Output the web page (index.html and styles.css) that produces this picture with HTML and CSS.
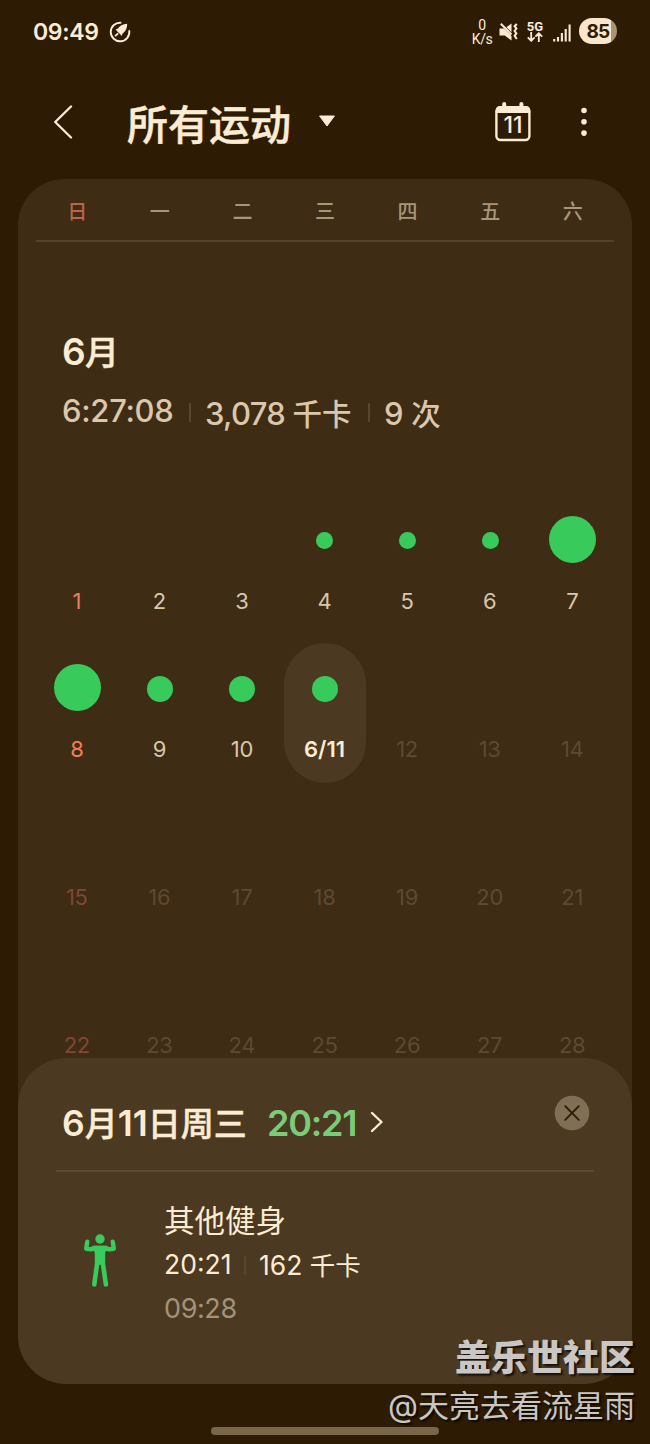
FILE: index.html
```html
<!DOCTYPE html>
<html lang="zh-CN">
<head>
    <meta charset="UTF-8">
    <meta name="viewport" content="width=device-width, initial-scale=1.0">
    <title>所有运动</title>
    <link rel="stylesheet" href="styles.css">
</head>
<body>
    <div class="status-bar">
        <span class="clock">09:49</span>
        <svg class="boost-icon" width="22" height="22" viewBox="0 0 22 22">
            <path d="M11.5 1.7A9.3 9.3 0 1 0 20.3 10" fill="none" stroke="#fcecd3" stroke-width="1.9" stroke-linecap="round"/>
            <path d="M18.2 2.8C13.6 3 10.400 5 9 7.600L6.600 8.600 8.400 10.400 11 13 12.600 15 13.6 12.6C16.6 10.400 18.3 7.2 18.2 2.8Z" fill="#fcecd3"/>
            <path d="M6.600 14.600L8.600 12.800" stroke="#fcecd3" stroke-width="1.8" stroke-linecap="round"/>
        </svg>
        <div class="status-right">
            <div class="net-speed"><span>0</span><span>K/s</span></div>
            <svg class="mute-icon" width="19" height="20" viewBox="0 0 19 20">
                <path d="M.5 6.6H5L12.5 14V18.5L5.8 13.6H.5Z" fill="#fcecd3"/>
                <path d="M7.4 5.2L12.5 1.5V10.2Z" fill="#fcecd3"/>
                <path d="M1.8 1.8L12.5 12.5" stroke="#fcecd3" stroke-width="2"/>
                <path d="M17.8 2L15.6 4.2 17.4 6.6 15.6 9 17.4 11.4 15.6 13.8 17.8 17" fill="none" stroke="#fcecd3" stroke-width="2"/>
            </svg>
            <div class="mobile-data">
                <span>5G</span>
                <svg width="16" height="10" viewBox="0 0 16 10">
                    <path d="M4.2 0V8.6M.8 5.4L4.2 8.8 7.6 5.4M11.8 10V1.4M8.4 4.6L11.8 1.2 15.2 4.6" fill="none" stroke="#fcecd3" stroke-width="1.8"/>
                </svg>
            </div>
            <svg class="signal-icon" width="18" height="18" viewBox="0 0 18 18">
                <path d="M1.2 15V17.4M5 13V17.4M8.9 9V17.4M12.7 5V17.4M16.6 .4V17.4" stroke="#fcecd3" stroke-width="2.1"/>
            </svg>
            <div class="battery">85</div>
        </div>
    </div>

    <div class="app-bar">
        <svg class="back" width="20" height="34" viewBox="0 0 20 34">
            <path d="M18 1.5L2.2 17 18 32.5" fill="none" stroke="#fcecd3" stroke-width="2.3" stroke-linecap="round" stroke-linejoin="round"/>
        </svg>
        <h1>所有运动</h1>
        <svg class="dropdown" width="18" height="12" viewBox="0 0 18 12">
            <path d="M1.6 1H16.4L9 11Z" fill="#fcecd3" stroke="#fcecd3" stroke-linejoin="round"/>
        </svg>
        <div class="today">
            <svg width="36" height="40" viewBox="0 0 36 40">
                <rect x="1.4" y="5.4" width="33" height="32.6" rx="4" fill="none" stroke="#fcecd3" stroke-width="2.4"/>
                <path d="M.8 11V8.5Q.8 4 5 4H31Q35.2 4 35.2 8.5V11Z" fill="#fcecd3"/>
                <path d="M9.2 2V7M26.4 2V7" stroke="#fcecd3" stroke-width="4" stroke-linecap="round"/>
            </svg>
            <span>11</span>
        </div>
        <svg class="more" width="6" height="30" viewBox="0 0 6 30">
            <circle cx="3" cy="3.5" r="2.8" fill="#fcecd3"/>
            <circle cx="3" cy="14.8" r="2.8" fill="#fcecd3"/>
            <circle cx="3" cy="26.1" r="2.8" fill="#fcecd3"/>
        </svg>
    </div>

    <div class="calendar">
        <div class="weekdays">
            <span class="sun">日</span><span>一</span><span>二</span><span>三</span><span>四</span><span>五</span><span>六</span>
        </div>
        <div class="summary">
            <h2><b>6</b>月</h2>
            <div class="totals">
                <span class="total-time">6:27:08</span>
                <i class="sep"></i>
                <span class="total-cal">3,078 <em>千卡</em></span>
                <i class="sep"></i>
                <span class="total-count">9 <em>次</em></span>
            </div>
        </div>
        <div class="days">
            <div class="day sun"><div class="mark"></div>1</div>
            <div class="day"><div class="mark"></div>2</div>
            <div class="day"><div class="mark"></div>3</div>
            <div class="day"><div class="mark"><i class="dot small"></i></div>4</div>
            <div class="day"><div class="mark"><i class="dot small"></i></div>5</div>
            <div class="day"><div class="mark"><i class="dot small"></i></div>6</div>
            <div class="day"><div class="mark"><i class="dot large"></i></div>7</div>

            <div class="day sun"><div class="mark"><i class="dot large"></i></div>8</div>
            <div class="day"><div class="mark"><i class="dot"></i></div>9</div>
            <div class="day"><div class="mark"><i class="dot"></i></div>10</div>
            <div class="day selected"><div class="mark"><i class="dot"></i></div>6/11</div>
            <div class="day future"><div class="mark"></div>12</div>
            <div class="day future"><div class="mark"></div>13</div>
            <div class="day future"><div class="mark"></div>14</div>

            <div class="day sun future"><div class="mark"></div>15</div>
            <div class="day future"><div class="mark"></div>16</div>
            <div class="day future"><div class="mark"></div>17</div>
            <div class="day future"><div class="mark"></div>18</div>
            <div class="day future"><div class="mark"></div>19</div>
            <div class="day future"><div class="mark"></div>20</div>
            <div class="day future"><div class="mark"></div>21</div>

            <div class="day sun future"><div class="mark"></div>22</div>
            <div class="day future"><div class="mark"></div>23</div>
            <div class="day future"><div class="mark"></div>24</div>
            <div class="day future"><div class="mark"></div>25</div>
            <div class="day future"><div class="mark"></div>26</div>
            <div class="day future"><div class="mark"></div>27</div>
            <div class="day future"><div class="mark"></div>28</div>
        </div>
    </div>

    <div class="sheet">
        <div class="sheet-header">
            <h3><b>6</b>月<b>11</b>日周三</h3>
            <span class="day-total">20:21</span>
            <svg class="chevron" width="14" height="22" viewBox="0 0 14 22">
                <path d="M2 2L11.5 11 2 20" fill="none" stroke="#fcecd3" stroke-width="2.4" stroke-linecap="round" stroke-linejoin="round"/>
            </svg>
            <svg class="close" width="36" height="36" viewBox="0 0 36 36">
                <circle cx="18" cy="18" r="17.3" fill="#806e55"/>
                <path d="M11.2 11.2L24.8 24.8M24.8 11.2L11.2 24.8" stroke="#2d1c05" stroke-width="1.9" stroke-linecap="round"/>
            </svg>
        </div>
        <div class="workout">
            <svg class="workout-icon" width="34" height="54" viewBox="0 0 34 54">
                <g fill="none" stroke="#3acb5d" stroke-linecap="round" stroke-linejoin="round">
                    <path d="M4.3 7.6L3.2 14.6Q7.5 16.2 12 14H22Q26.5 16.2 30.8 14.6L29.7 7.6" stroke-width="4.4"/>
                    <path d="M14.6 26L11.3 50.4M19.4 26L22.9 50.4" stroke-width="4.6"/>
                </g>
                <path d="M9 11.7H25L22.2 19V29L17 31 11.8 29V19Z" fill="#3acb5d"/>
                <circle cx="17" cy="5" r="4.7" fill="#3acb5d"/>
            </svg>
            <div class="workout-info">
                <div class="workout-name">其他健身</div>
                <div class="workout-stats">
                    <span class="duration">20:21</span>
                    <i class="sep"></i>
                    <span class="calories">162 <em>千卡</em></span>
                </div>
                <div class="workout-start">09:28</div>
            </div>
        </div>
    </div>

    <div class="home-handle"></div>

    <div class="watermark">
        <div class="community">盖乐世社区</div>
        <div class="author">@天亮去看流星雨</div>
    </div>
</body>
</html>
```
FILE: styles.css
```css
* {
    box-sizing: border-box;
}
body {
    position: relative;
    width: 650px;
    height: 1444px;
    margin: 0;
    overflow: hidden;
    background-color: #2d1c03;
    color: #fcecd3;
    font-family: Inter, "Noto Sans CJK SC", sans-serif;
}
h1, h2, h3 {
    margin: 0;
    font-weight: 500;
    -webkit-text-stroke: 0.5px currentColor;
}
h2 b, h3 b {
    -webkit-text-stroke: 0;
}
svg {
    display: block;
    flex: none;
}
em, i {
    font-style: normal;
}

/* status bar */
.status-bar {
    display: flex;
    align-items: center;
    height: 62px;
    padding: 0 33px;
}
.clock {
    width: 66px;
    padding-top: 1px;
    font-size: 23px;
    font-weight: 600;
    letter-spacing: -0.3px;
    white-space: nowrap;
}
.boost-icon {
    margin: 1px 0 0 10px;
}
.status-right {
    display: flex;
    align-items: center;
    margin-left: auto;
}
.net-speed {
    display: flex;
    flex-direction: column;
    align-items: center;
    width: 20px;
    padding-top: 1px;
    font-family: Roboto, sans-serif;
    font-size: 14px;
    letter-spacing: -0.5px;
    line-height: 14px;
}
.mute-icon {
    margin: 1px 0 0 7px;
}
.mobile-data {
    display: flex;
    flex-direction: column;
    align-items: center;
    width: 18px;
    margin-left: 8px;
    font-family: Roboto, sans-serif;
    font-size: 13px;
    font-weight: 700;
    line-height: 11px;
}
.signal-icon {
    margin: 3px 8px 0 9px;
}
.battery {
    width: 38px;
    height: 26px;
    border-radius: 13px;
    background: linear-gradient(to right, #f8e7cd 32px, #a89474 32px);
    color: #2d1c03;
    font-size: 19px;
    font-weight: 700;
    letter-spacing: -0.7px;
    line-height: 27px;
    text-align: center;
}

/* app bar */
.app-bar {
    display: flex;
    align-items: center;
    height: 117px;
    padding: 2px 63px 0 53px;
}
.app-bar h1 {
    margin-left: 54px;
    padding-top: 7px;
    font-size: 41px;
    line-height: 60px;
}
.dropdown {
    margin: -2px 0 0 27px;
}
.today {
    display: grid;
    margin-left: auto;
    margin-right: 50px;
}
.today svg, .today span {
    grid-area: 1 / 1;
}
.today span {
    align-self: center;
    padding-top: 6px;
    font-size: 23px;
    font-weight: 500;
    line-height: 28px;
    text-align: center;
}

/* month */
.calendar {
    height: 980px;
    margin: 0 18px;
    padding: 0 18px;
    border-radius: 46px 46px 0 0;
    background-color: #3e2c14;
    overflow: hidden;
}
.weekdays {
    display: grid;
    grid-template-columns: repeat(7, 1fr);
    height: 63px;
    border-bottom: 2px solid #57432a;
    color: #a8957a;
    font-size: 20px;
    font-weight: 500;
    line-height: 66px;
    text-align: center;
}
.weekdays .sun {
    color: #bb6448;
}
.summary {
    height: 253px;
    padding: 86px 26px 0;
}
.summary h2 {
    font-size: 34px;
    line-height: 48px;
}
.summary h2 b {
    font-size: 37px;
    font-weight: 600;
    letter-spacing: -0.7px;
}
.totals {
    display: flex;
    align-items: center;
    height: 44px;
    margin-top: 13px;
    color: #dac7ac;
    font-size: 31px;
    font-weight: 500;
    letter-spacing: -0.3px;
    line-height: 44px;
    white-space: nowrap;
}
.totals em {
    font-size: 29.5px;
    letter-spacing: 0;
}
.total-time {
    width: 112px;
    padding-bottom: 3px;
}
.sep {
    flex: none;
    width: 2px;
    height: 19px;
    background-color: #5a472e;
}
.totals .sep {
    margin: 0 14px 0 15px;
}
.total-cal {
    width: 148px;
    padding-top: 4px;
    letter-spacing: -0.7px;
}
.total-count {
    padding-top: 4px;
}
.days {
    display: grid;
    grid-template-columns: repeat(7, 1fr);
    grid-auto-rows: 140px;
    row-gap: 8px;
}
.day {
    padding-right: 1px;
    color: #d9c6ab;
    font-size: 22px;
    letter-spacing: -0.3px;
    line-height: 28px;
    text-align: center;
}
.day.sun {
    color: #f07d5c;
}
.day.future {
    color: #5d4a32;
}
.day.sun.future {
    color: #814731;
}
.day.selected {
    border-radius: 41px;
    background-color: #4b3921;
    color: #fcecd3;
    font-weight: 600;
    letter-spacing: 0;
}
.mark {
    display: flex;
    align-items: center;
    justify-content: center;
    height: 92px;
    margin-right: -1px;
}
.dot {
    width: 26px;
    height: 26px;
    border-radius: 50%;
    background-color: #38cb5c;
}
.dot.small {
    width: 17px;
    height: 17px;
    margin-bottom: 1px;
}
.dot.large {
    width: 47px;
    height: 47px;
    margin-bottom: 3px;
}

/* selected day */
.sheet {
    position: relative;
    height: 326px;
    margin: -101px 18px 0;
    padding: 0 38px;
    border-radius: 48px;
    background-color: #4b3921;
}
.sheet-header {
    display: flex;
    align-items: center;
    height: 114px;
    padding: 17px 4px 0 6px;
    border-bottom: 2px solid #5d4a31;
}
.sheet-header h3 {
    width: 186px;
    padding-top: 2px;
    font-size: 33px;
    line-height: 48px;
    white-space: nowrap;
}
.sheet-header h3 b {
    font-size: 35.5px;
    font-weight: 600;
}
.day-total {
    width: 89px;
    margin-left: 19px;
    color: #7bcc79;
    font-size: 36px;
    font-weight: 600;
    letter-spacing: -1.2px;
    white-space: nowrap;
}
.chevron {
    margin: -2px 0 0 14px;
}
.close {
    margin: 0 0 20px auto;
}
.workout {
    display: flex;
    padding-top: 24px;
}
.workout-icon {
    margin: 38px 47px 0 27px;
}
.workout-name {
    font-size: 30.5px;
    line-height: 49px;
}
.workout-stats {
    display: flex;
    align-items: center;
    height: 41px;
    font-size: 26.5px;
    line-height: 41px;
    white-space: nowrap;
}
.workout-stats em {
    font-size: 25.5px;
}
.workout-stats .sep {
    margin: 0 13px;
}
.duration {
    width: 67px;
    padding-bottom: 2px;
}
.workout-start {
    color: #a4927a;
    font-size: 27px;
    letter-spacing: -0.4px;
    line-height: 46px;
}
.home-handle {
    width: 228px;
    height: 8px;
    margin: 43px auto 0;
    border-radius: 4px;
    background-color: #7a664a;
}

/* post watermark, over the page */
.watermark {
    position: absolute;
    right: 15px;
    bottom: 14px;
    color: #c9c6c3;
    text-align: right;
    text-shadow: 2px 2px 2px rgba(0, 0, 0, 0.75);
}
.community {
    font-size: 36px;
    font-weight: 900;
    line-height: 48px;
}
.author {
    font-size: 31px;
    line-height: 48px;
}
```
